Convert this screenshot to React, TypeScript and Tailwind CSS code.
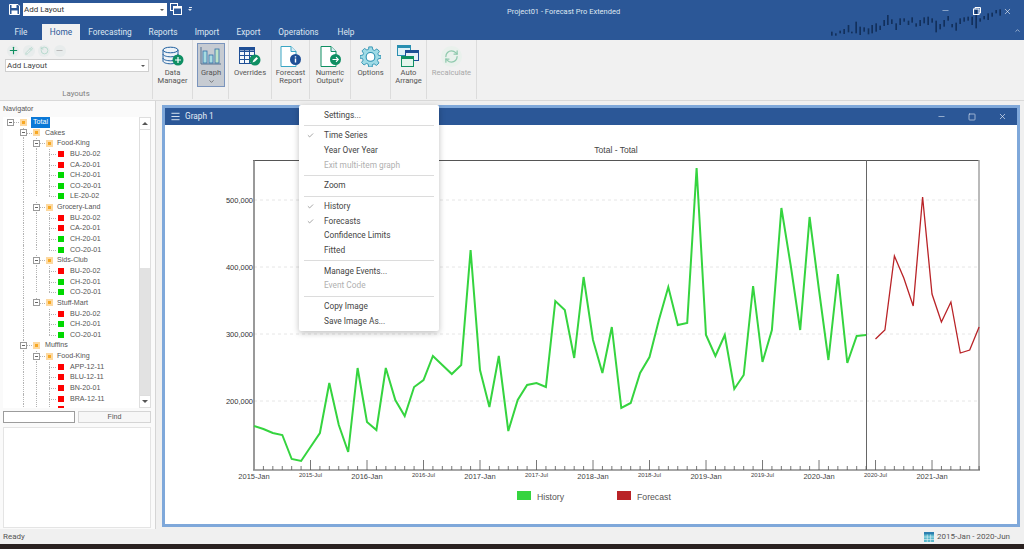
import { Minus, Pencil, Plus, RefreshCw, RotateCcw, X, Check, ChevronDown, ChevronUp, Menu, Square } from 'lucide-react';
import type { ReactNode } from 'react';

const historyY = [
  426, 429, 433, 435, 459, 461, 447, 433, 383, 425, 452, 368, 422, 430, 368, 400, 416, 387, 380, 356, 365, 374, 365,
  250, 370, 407, 356, 431, 400, 385, 383, 387, 301, 310, 358, 277, 340, 373, 327, 408, 403, 373, 357, 320, 287, 325,
  323, 168, 335, 356, 335, 389, 375, 286, 362, 330, 208, 266, 330, 217, 290, 360, 274, 363, 336, 335,
];
const forecastY = [339, 330, 256, 278, 306, 197, 294, 322, 302, 353, 350, 327];

const monthX = (i: number) => 254 + i * 9.417;
const toPoints = (ys: number[], start: number) => ys.map((y, i) => `${monthX(start + i).toFixed(1)},${y}`).join(' ');

const gridRows = [
  { y: 200, label: '500,000' },
  { y: 267, label: '400,000' },
  { y: 334, label: '300,000' },
  { y: 401, label: '200,000' },
];

const sparkBars = [
  [95, 95, 107], [107, 100, 107], [120, 92, 100], [132, 87, 102], [145, 75, 97], [155, 95, 100], [168, 65, 100],
  [180, 80, 105], [192, 82, 95], [205, 85, 103], [216, 75, 100], [228, 70, 95], [240, 77, 90], [252, 60, 78],
  [263, 45, 75], [275, 58, 72], [288, 70, 90], [300, 55, 75], [312, 55, 65], [325, 62, 75], [336, 52, 68],
  [348, 70, 80], [360, 60, 78], [372, 52, 70], [384, 50, 75], [396, 55, 68], [408, 62, 97], [420, 72, 88],
  [432, 60, 80], [444, 48, 62], [456, 72, 82], [468, 68, 92], [480, 55, 72], [492, 52, 65], [504, 50, 62],
  [516, 50, 75], [528, 30, 85], [540, 55, 65], [552, 48, 58], [564, 40, 60], [576, 38, 50], [588, 30, 40], [600, 28, 47],
];

const r = 'r';
const g = 'g';
const tree: { level: number; label: string; color?: string; last?: boolean }[] = [
  { level: 0, label: 'Total' },
  { level: 1, label: 'Cakes' },
  { level: 2, label: 'Food-King' },
  { level: 3, label: 'BU-20-02', color: r },
  { level: 3, label: 'CA-20-01', color: r },
  { level: 3, label: 'CH-20-01', color: g },
  { level: 3, label: 'CO-20-01', color: g },
  { level: 3, label: 'LE-20-02', color: g, last: true },
  { level: 2, label: 'Grocery-Land' },
  { level: 3, label: 'BU-20-02', color: r },
  { level: 3, label: 'CA-20-01', color: r },
  { level: 3, label: 'CH-20-01', color: g },
  { level: 3, label: 'CO-20-01', color: g, last: true },
  { level: 2, label: 'Sids-Club' },
  { level: 3, label: 'BU-20-02', color: r },
  { level: 3, label: 'CH-20-01', color: g },
  { level: 3, label: 'CO-20-01', color: g, last: true },
  { level: 2, label: 'Stuff-Mart', last: true },
  { level: 3, label: 'BU-20-02', color: r },
  { level: 3, label: 'CH-20-01', color: g },
  { level: 3, label: 'CO-20-01', color: g, last: true },
  { level: 1, label: 'Muffins' },
  { level: 2, label: 'Food-King' },
  { level: 3, label: 'APP-12-11', color: r },
  { level: 3, label: 'BLU-12-11', color: r },
  { level: 3, label: 'BN-20-01', color: r },
  { level: 3, label: 'BRA-12-11', color: r },
  { level: 3, label: '', color: r },
];

const stuffMartStart = tree.findIndex((n) => n.label === 'Stuff-Mart');
const muffinsStart = tree.findIndex((n) => n.label === 'Muffins');

const menu: (string | { label: string; check?: boolean; off?: boolean })[] = [
  { label: 'Settings...' },
  'sep',
  { label: 'Time Series', check: true },
  { label: 'Year Over Year' },
  { label: 'Exit multi-item graph', off: true },
  'sep',
  { label: 'Zoom' },
  'sep',
  { label: 'History', check: true },
  { label: 'Forecasts', check: true },
  { label: 'Confidence Limits' },
  { label: 'Fitted' },
  'sep',
  { label: 'Manage Events...' },
  { label: 'Event Code', off: true },
  'sep',
  { label: 'Copy Image' },
  { label: 'Save Image As...' },
];

const DataIcon = () => (
  <svg width="22" height="21" viewBox="0 0 22 21">
    <g fill="#eef3f8" stroke="#1f5f9e" strokeWidth="1">
      <path d="M1 4v11c0 1.6 3.6 2.8 7.5 2.8S16 16.600 16 15V4" />
      <ellipse cx="8.500" cy="4" rx="7.500" ry="2.800" />
      <path d="M1 8c0 1.600 3.600 2.800 7.500 2.800S16 9.600 16 8M1 12c0 1.600 3.600 2.800 7.500 2.800S16 13.600 16 12" fill="none" />
    </g>
    <circle cx="16" cy="14" r="5.500" fill="#0f8f63" />
    <path d="M16 11v6M13 14h6" stroke="#fff" strokeWidth="1.200" />
  </svg>
);

const GraphIcon = () => (
  <svg width="22" height="18" viewBox="0 0 22 18">
    <path d="M1 0v17h20" fill="none" stroke="#55708f" strokeWidth="1" />
    <rect x="3" y="4" width="4" height="12" fill="#a7dbe0" stroke="#2f6ea8" strokeWidth="0.800" />
    <rect x="9" y="8" width="4" height="8" fill="#a7dbe0" stroke="#2f6ea8" strokeWidth="0.800" />
    <rect x="15" y="2" width="4" height="14" fill="#bfe3c8" stroke="#2f6ea8" strokeWidth="0.800" />
  </svg>
);

const TableIcon = () => (
  <svg width="22" height="19" viewBox="0 0 22 19">
    <rect x="0.500" y="0.500" width="15" height="16" fill="#f4f7fb" stroke="#1f4f96" />
    <path d="M0.500 4.500h15M0.500 8.500h15M0.500 12.500h15M5.500 0.500v16M10.500 0.500v16" stroke="#1f4f96" strokeWidth="1" />
    <rect x="0.500" y="0.500" width="15" height="3" fill="#1f4f96" />
    <circle cx="16" cy="13" r="5.500" fill="#0f8f63" />
    <path d="M13.500 15.500l1-2.500 3-3 1.500 1.500-3 3z" fill="#fff" />
  </svg>
);

const DocIcon = ({ color, stroke, arrow }: { color: string; stroke: string; arrow?: boolean }) => (
  <svg width="23" height="21" viewBox="0 0 23 21">
    <path d="M2 0.500h10l5 5v15H2z" fill="#fff" stroke={stroke} strokeWidth="1" />
    <path d="M12 0.500v5h5" fill="#dfeaf5" stroke={stroke} strokeWidth="1" />
    <circle cx="16.500" cy="13.500" r="5.500" fill={color} />
    {arrow ? (
      <path d="M13.500 13.500h5.500M17 11.200l2.300 2.300-2.300 2.300" fill="none" stroke="#fff" strokeWidth="1.100" />
    ) : (
      <path d="M16.500 10.300v1.200M16.500 12.500v4" stroke="#fff" strokeWidth="1.400" />
    )}
  </svg>
);

const GearIcon = () => (
  <svg width="21" height="21" viewBox="0 0 24 24">
    <path
      d="M10 1h4l.6 3.200 2 .9L19.400 3.300l2.800 2.800-1.800 2.800.9 2L24 11v3l-3.200.6-.9 2 1.800 2.800-2.800 2.800-2.800-1.800-2 .9L14 24h-4l-.6-3.200-2-.9-2.800 1.800-2.800-2.800 1.800-2.800-.9-2L0 14v-3l3.200-.6.900-2L2.300 5.600l2.800-2.800 2.800 1.800 2-.9z"
      fill="#9fdbe6"
      stroke="#2a8fb0"
      strokeWidth="1"
    />
    <circle cx="12" cy="12.500" r="5" fill="#fff" stroke="#2a8fb0" strokeWidth="1.200" />
  </svg>
);

const ArrangeIcon = () => (
  <svg width="23" height="23" viewBox="0 0 23 23">
    <rect x="0.500" y="0.500" width="13" height="10" fill="#dff1f7" stroke="#2a8fb0" />
    <rect x="0.500" y="0.500" width="13" height="2.500" fill="#2a8fb0" />
    <rect x="8.500" y="5.500" width="13" height="10" fill="#e8eef8" stroke="#1f4f96" />
    <rect x="8.500" y="5.500" width="13" height="2.500" fill="#1f4f96" />
    <rect x="4.500" y="11.500" width="12" height="10" fill="#e4f5ec" stroke="#0f8f63" />
    <rect x="4.500" y="11.500" width="12" height="2.500" fill="#0f8f63" />
  </svg>
);

const RecalcIcon = () => (
  <div className="flex h-[21px] w-[21px] items-center justify-center rounded-full bg-[#e9f1ec]">
    <RefreshCw size={15} color="#8fc9ad" strokeWidth={2} />
  </div>
);

function RibbonButton({
  width,
  icon,
  lines,
  active,
  off,
  chevron,
}: {
  width: string;
  icon: ReactNode;
  lines: string[];
  active?: boolean;
  off?: boolean;
  chevron?: boolean;
}) {
  return (
    <div className={`flex h-[59px] shrink-0 justify-center border-r border-[#dcdcdc] pt-[3px] ${width}`}>
      <div
        className={`flex h-[44px] w-[28px] flex-col items-center border ${
          active ? 'ml-[1px] border-[#7a94bd] bg-[#c6cbd2]' : 'border-transparent'
        }`}
      >
        <div className="flex h-[24px] items-center justify-center whitespace-nowrap">{icon}</div>
        {lines.map((line) => (
          <div
            key={line}
            className={`flex h-[8.700px] items-center whitespace-nowrap text-[7.600px] leading-none ${
              off ? 'text-[#a8a8a8]' : 'text-[#555555]'
            }`}
          >
            {line}
          </div>
        ))}
        {chevron && <ChevronDown size={7} color="#555555" strokeWidth={2.500} className="mt-[1px]" />}
      </div>
    </div>
  );
}

function TreeRow({ node, index }: { node: (typeof tree)[number]; index: number }) {
  const color = node.color === 'r' ? '#ff0000' : '#00d800';
  const folderX = [17, 30, 43][node.level];
  const boxX = [4, 17, 30][node.level];
  const textX = [28, 42, 54, 67][node.level];
  const inGroup = index > stuffMartStart && index < muffinsStart;
  return (
    <div className="relative h-[10.650px] whitespace-nowrap font-['Liberation_Sans',sans-serif] text-[7.100px] leading-[10.650px] text-[#555555]">
      {node.level > 0 && (
        <div className="absolute top-0 h-full border-l border-dotted border-[#b4b4b4]" style={{ left: 20 }} />
      )}
      {node.level >= 2 && !inGroup && (
        <div
          className="absolute top-0 border-l border-dotted border-[#b4b4b4]"
          style={{ left: 33, height: node.last ? 5 : 11 }}
        />
      )}
      {node.level === 3 && (
        <>
          <div
            className="absolute top-0 border-l border-dotted border-[#b4b4b4]"
            style={{ left: 46, height: node.last ? 5 : 11 }}
          />
          <div className="absolute top-[5px] w-[7px] border-t border-dotted border-[#b4b4b4]" style={{ left: 46 }} />
          <div className="absolute top-[2px] h-[6px] w-[6px]" style={{ left: 55, backgroundColor: color }} />
        </>
      )}
      {node.level < 3 && (
        <>
          <div
            className="absolute top-[1.500px] flex h-[7px] w-[7px] items-center justify-center border border-[#9a9a9a] bg-white"
            style={{ left: boxX }}
          >
            <div className="h-px w-[3px] bg-[#666666]" />
          </div>
          <div className="absolute top-[5px] w-[5px] border-t border-dotted border-[#b4b4b4]" style={{ left: boxX + 7 }} />
          <div
            className="absolute top-[1.500px] flex h-[7px] w-[7px] items-center justify-center bg-[#fdd9a0]"
            style={{ left: folderX }}
          >
            <div className="h-[3px] w-[3px] bg-[#f7a823]" />
          </div>
        </>
      )}
      {node.label && (
        <div
          className={`absolute top-0 ${node.level === 0 ? 'bg-[#0a78d7] px-[2px] text-white' : ''}`}
          style={{ left: textX }}
        >
          {node.label}
        </div>
      )}
    </div>
  );
}

function Chart() {
  return (
    <svg width="852" height="399" viewBox="165 125 852 399" className="block font-['Liberation_Sans',sans-serif]">
      <text x="616" y="153" textAnchor="middle" className="fill-[#444444] text-[8.500px]">
        Total - Total
      </text>
      {gridRows.map((row) => (
        <g key={row.y}>
          <line x1="254" x2="979" y1={row.y} y2={row.y} stroke="#e6e6e6" strokeWidth="1" strokeDasharray="3 3" />
          <text x="253" y={row.y + 3} textAnchor="end" className="fill-[#333333] text-[7.500px]">
            {row.label}
          </text>
        </g>
      ))}
      <line x1="253" x2="979" y1="160.500" y2="160.500" stroke="#555555" />
      <line x1="254" x2="254" y1="160" y2="470" stroke="#777777" strokeWidth="1.500" />
      <line x1="979" x2="979" y1="160" y2="470" stroke="#a3a3a3" strokeWidth="1.500" />
      <line x1="866.500" x2="866.500" y1="160" y2="470" stroke="#666666" />
      <line x1="253" x2="980" y1="470" y2="470" stroke="#8a8a8a" strokeWidth="1.500" />
      {Array.from({ length: 77 }, (_, i) => i + 1).map((i) => (
        <line
          key={i}
          x1={monthX(i)}
          x2={monthX(i)}
          y1={i % 6 === 0 ? 460 : 466}
          y2="470"
          stroke="#555555"
          strokeWidth="0.800"
        />
      ))}
      {[2015, 2016, 2017, 2018, 2019, 2020, 2021].map((year, i) => (
        <text key={year} x={monthX(i * 12)} y="479" textAnchor="middle" className="fill-[#444444] text-[7.500px]">
          {year}-Jan
        </text>
      ))}
      {[2015, 2016, 2017, 2018, 2019, 2020].map((year, i) => (
        <text key={year} x={monthX(i * 12 + 6)} y="477" textAnchor="middle" className="fill-[#444444] text-[6px]">
          {year}-Jul
        </text>
      ))}
      <polyline points={toPoints(historyY, 0)} fill="none" stroke="#35d43f" strokeWidth="2" strokeLinejoin="miter" />
      <polyline points={toPoints(forecastY, 66)} fill="none" stroke="#b92327" strokeWidth="1.300" strokeLinejoin="miter" />
      <rect x="517" y="491" width="14" height="9" fill="#35d43f" />
      <text x="537" y="500" className="fill-[#555555] text-[8.700px]">
        History
      </text>
      <rect x="617" y="491" width="14" height="9" fill="#b92327" />
      <text x="637" y="500" className="fill-[#555555] text-[8.700px]">
        Forecast
      </text>
    </svg>
  );
}

export default function App() {
  const tabs = [
    { label: 'File', width: 'w-[42px]' },
    { label: 'Home', width: 'w-[38px]', active: true },
    { label: 'Forecasting', width: 'w-[60px]' },
    { label: 'Reports', width: 'w-[46px]' },
    { label: 'Import', width: 'w-[42px]' },
    { label: 'Export', width: 'w-[41px]' },
    { label: 'Operations', width: 'w-[59px]' },
    { label: 'Help', width: 'w-[36px]' },
  ];

  return (
    <div className="relative flex h-[549px] w-[1024px] flex-col overflow-hidden bg-[#f0f0f0] font-['Roboto',sans-serif]">
      {/* title bar */}
      <div className="relative z-10 flex h-[24px] shrink-0 items-start bg-[#2b5797] pl-[9px] pt-[3px]">
        <svg width="11" height="11" viewBox="0 0 11 11" className="mt-[1px]">
          <path d="M0.500 0.500h8.500l1.500 1.500v8.500h-10z" fill="none" stroke="#fff" />
          <rect x="2.500" y="1" width="5" height="3" fill="#fff" />
          <rect x="2.500" y="6.500" width="6" height="4" fill="#fff" />
        </svg>
        <div className="ml-[3px] flex h-[13px] w-[144px] items-center justify-between bg-white pl-[1px] pr-[3px] text-[8px] text-[#333333]">
          <span>Add Layout</span>
          <span className="h-0 w-0 border-x-[2px] border-t-[2px] border-x-transparent border-t-[#555555]" />
        </div>
        <svg width="12" height="12" viewBox="0 0 12 12" className="ml-[3px]">
          <rect x="0.500" y="0.500" width="7" height="7" fill="none" stroke="#fff" />
          <rect x="3.500" y="3.500" width="8" height="8" fill="#2b5797" stroke="#fff" />
          <rect x="3.500" y="3.500" width="8" height="2" fill="#fff" />
        </svg>
        <div className="ml-[6px] mt-[4px] flex flex-col items-center gap-[1px]">
          <span className="h-px w-[3px] bg-[#dfe7f2]" />
          <span className="h-0 w-0 border-x-[2px] border-t-[2px] border-x-transparent border-t-[#dfe7f2]" />
        </div>
        <div className="absolute left-[507px] top-[6px] whitespace-nowrap text-[7.500px] leading-[11px] text-[#dfe7f2]">
          Project01 - Forecast Pro Extended
        </div>
        <svg width="224" height="40" viewBox="0 0 672 120" className="absolute left-[800px] top-0">
          {sparkBars.map(([x, y1, y2]) => (
            <rect key={x} x={x - 2} y={y1} width="5" height={y2 - y1} fill="#12305c" />
          ))}
        </svg>
        <div className="absolute left-[941px] top-[6px] text-[#d5dfee]">
          <Minus size={9} strokeWidth={1.500} />
        </div>
        <div className="absolute left-[973px] top-[7px]">
          <svg width="8" height="8" viewBox="0 0 8 8">
            <rect x="0.500" y="2" width="5.500" height="5.500" fill="none" stroke="#fff" />
            <path d="M2 2V0.500h5.500V6H6" fill="none" stroke="#fff" />
          </svg>
        </div>
        <div className="absolute left-[1003px] top-[7px] text-white">
          <X size={9} strokeWidth={1.500} />
        </div>
      </div>

      {/* tabs */}
      <div className="relative flex h-[16px] shrink-0 bg-[#2b5797]">
        {tabs.map((tab) => (
          <div
            key={tab.label}
            className={`flex shrink-0 items-center justify-center text-[8.300px] ${tab.width} ${
              tab.active ? 'bg-[#f1f1f1] text-[#2b5797]' : 'text-[#dfe7f2]'
            }`}
          >
            {tab.label}
          </div>
        ))}
        <ChevronUp size={7} color="#dfe7f2" strokeWidth={2} className="absolute left-[1014px] top-[3px]" />
      </div>

      {/* ribbon */}
      <div className="flex h-[61px] shrink-0 border-b border-[#d9d9d9] bg-[#f1f1f1]">
        <div className="flex h-[59px] w-[153px] shrink-0 flex-col border-r border-[#dcdcdc] pl-[5px]">
          <div className="mt-[4px] flex h-[13px] items-center gap-[3.500px] pl-[2px]">
            <div className="flex h-[12px] w-[12px] items-center justify-center rounded-full bg-[#e8ecec]">
              <Plus size={11} color="#0f9060" strokeWidth={2.500} />
            </div>
            <div className="flex h-[12px] w-[12px] items-center justify-center rounded-full bg-[#e8ecec]">
              <Pencil size={8} color="#a9d4c5" strokeWidth={2} />
            </div>
            <div className="flex h-[12px] w-[12px] items-center justify-center rounded-full bg-[#e8ecec]">
              <RotateCcw size={9} color="#a9d4c5" strokeWidth={2} />
            </div>
            <div className="flex h-[12px] w-[12px] items-center justify-center rounded-full bg-[#e8ecec]">
              <Minus size={9} color="#a9a9a9" strokeWidth={2} />
            </div>
          </div>
          <div className="mt-[2px] flex h-[13px] w-[144px] items-center justify-between border border-[#cfcfcf] bg-white pl-[1px] pr-[3px] text-[8px] text-[#444444]">
            <span>Add Layout</span>
            <span className="h-0 w-0 border-x-[2px] border-t-[2px] border-x-transparent border-t-[#555555]" />
          </div>
          <div className="mt-[16px] pr-[5px] text-center text-[7.800px] leading-[11px] text-[#808080]">Layouts</div>
        </div>
        <RibbonButton width="w-[40px]" icon={<DataIcon />} lines={['Data', 'Manager']} />
        <RibbonButton width="w-[36px]" icon={<GraphIcon />} lines={['Graph']} active chevron />
        <RibbonButton width="w-[43px]" icon={<TableIcon />} lines={['Overrides']} />
        <RibbonButton width="w-[38px]" icon={<DocIcon color="#1f4f96" stroke="#3aa6c4" />} lines={['Forecast', 'Report']} />
        <RibbonButton width="w-[41px]" icon={<DocIcon color="#0f8f63" stroke="#0f8f63" arrow />} lines={['Numeric', 'Output˅']} />
        <RibbonButton width="w-[40px]" icon={<GearIcon />} lines={['Options']} />
        <RibbonButton width="w-[36px]" icon={<ArrangeIcon />} lines={['Auto', 'Arrange']} />
        <RibbonButton width="w-[50px]" icon={<RecalcIcon />} lines={['Recalculate']} off />
      </div>

      {/* body */}
      <div className="flex min-h-0 flex-1">
        <div className="flex w-[156px] shrink-0 flex-col border-r border-[#d5d5d5] bg-[#fafafa] px-[3px] font-['Liberation_Sans',sans-serif]">
          <div className="h-[16px] pt-[3px] text-[7.100px] leading-[11px] text-[#555555]">Navigator</div>
          <div className="flex h-[291px] w-[148px] overflow-hidden bg-white">
            <div className="h-full w-[136px] overflow-hidden">
              {tree.map((node, i) => (
                <TreeRow key={i} node={node} index={i} />
              ))}
            </div>
            <div className="flex w-[12px] shrink-0 flex-col border border-[#dedede]">
              <div className="flex h-[12px] items-center justify-center border-b border-[#dedede]">
                <span className="h-0 w-0 border-x-[3px] border-b-[3px] border-x-transparent border-b-[#555555]" />
              </div>
              <div className="h-[138px] bg-white" />
              <div className="flex-1 bg-[#e2e2e2]" />
              <div className="flex h-[12px] items-center justify-center border-t border-[#dedede] bg-white">
                <span className="h-0 w-0 border-x-[3px] border-t-[3px] border-x-transparent border-t-[#555555]" />
              </div>
            </div>
          </div>
          <div className="mt-[3px] flex h-[12px] w-[148px] gap-[3px]">
            <div className="w-[72px] border border-[#9c9c9c] bg-white" />
            <div className="flex w-[73px] items-center justify-center border border-[#d5d5d5] bg-[#f7f7f7] text-[7.100px] text-[#555555]">
              Find
            </div>
          </div>
          <div className="mb-[1px] mt-[4px] w-[148px] flex-1 border border-[#e4e4e4] bg-white" />
        </div>

        <div className="flex-1 pb-[2px] pl-[6px] pr-[4px] pt-[4px]">
          <div className="flex h-full flex-col border-[3px] border-[#7fa8da] bg-white">
            <div className="flex h-[17px] shrink-0 items-center bg-[#2b5797] pl-[5px] text-[#e6edf6]">
              <Menu size={11} strokeWidth={2} />
              <span className="ml-[4px] text-[8.300px]">Graph 1</span>
              <div className="ml-auto flex items-center gap-[22px] pr-[10px]">
                <Minus size={9} strokeWidth={1.500} />
                <Square size={8} strokeWidth={1.800} />
                <X size={9} strokeWidth={1.800} />
              </div>
            </div>
            <Chart />
          </div>
        </div>
      </div>

      {/* status bar */}
      <div className="flex h-[15px] shrink-0 items-center justify-between bg-[#f0f0f0] pl-[3px] pr-[14px] text-[8px] text-[#555555]">
        <span>Ready</span>
        <span className="flex items-center gap-[3px]">
          <svg width="10" height="10" viewBox="0 0 10 10">
            <rect width="10" height="10" fill="#5bb8cc" />
            <rect y="0" width="10" height="2.500" fill="#2c7fb0" />
            <path d="M0 5h10M0 7.500h10M3.300 2.500V10M6.600 2.500V10" stroke="#e6f4f7" strokeWidth="0.600" />
          </svg>
          2015-Jan - 2020-Jun
        </span>
      </div>
      <div className="h-[5px] shrink-0 bg-[#2a2120]" />

      {/* graph context menu */}
      <div className="absolute left-[299px] top-[105px] z-20 w-[140px] rounded-[2px] bg-white py-[2.600px] shadow-[0_2px_6px_rgba(0,0,0,0.25)]">
        {menu.map((item, i) =>
          typeof item === 'string' ? (
            <div key={i} className="mx-[5px] my-[2.500px] h-px bg-[#dcdcdc]" />
          ) : (
            <div
              key={i}
              className={`relative h-[14.700px] pl-[25px] text-[8.300px] leading-[14.700px] ${
                item.off ? 'text-[#b0b0b0]' : 'text-[#444444]'
              }`}
            >
              {item.check && (
                <Check size={7} color="#666666" strokeWidth={2} className="absolute left-[8px] top-[4px]" />
              )}
              {item.label}
            </div>
          ),
        )}
      </div>
    </div>
  );
}
